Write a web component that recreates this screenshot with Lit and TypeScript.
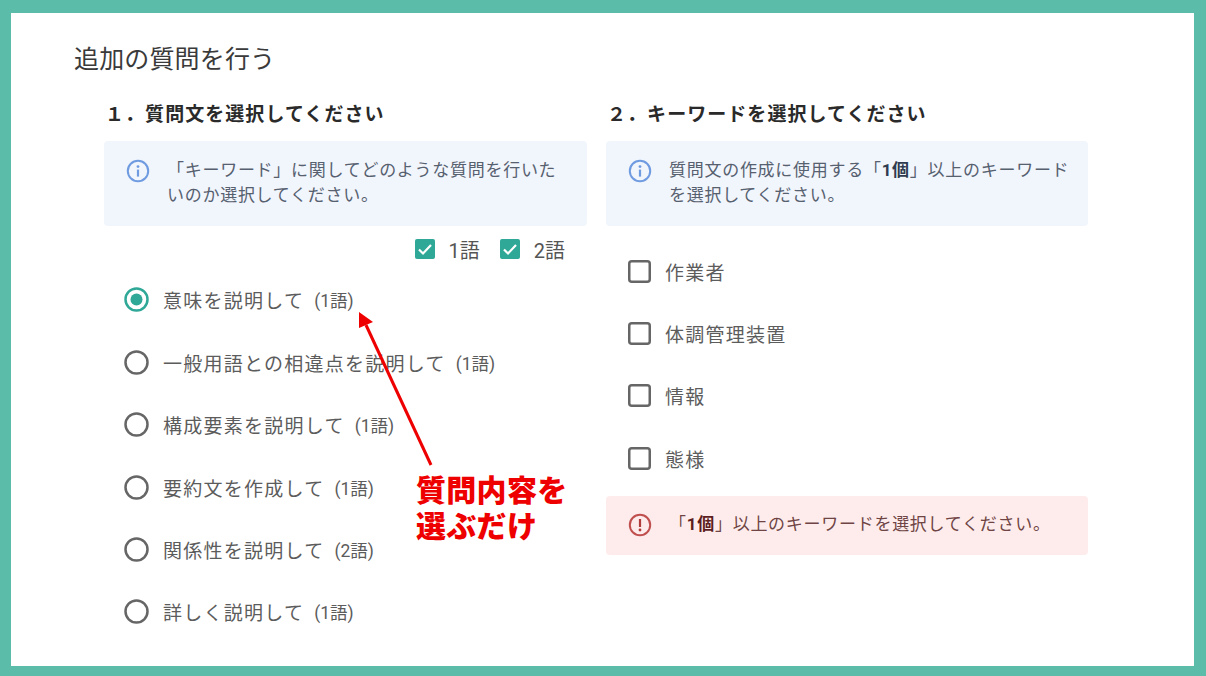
import { LitElement, html, css, svg } from "lit";
import { customElement } from "lit/decorators.js";

const radios = [
  ["意味を説明して", "1語", true],
  ["一般用語との相違点を説明して", "1語", false],
  ["構成要素を説明して", "1語", false],
  ["要約文を作成して", "1語", false],
  ["関係性を説明して", "2語", false],
  ["詳しく説明して", "1語", false],
] as const;
const keywords = ["作業者", "体調管理装置", "情報", "態様"];

const infoIcon = html`<svg class="ic" viewBox="0 0 24 24" fill="none"><circle cx="12" cy="12" r="10.2" stroke="#6f9be0" stroke-width="2"/><rect x="10.9" y="10.6" width="2.2" height="7" fill="#6f9be0"/><circle cx="12" cy="7.6" r="1.4" fill="#6f9be0"/></svg>`;
const errIcon = html`<svg class="ic" viewBox="0 0 24 24" fill="none"><circle cx="12" cy="12" r="10.2" stroke="#c0504f" stroke-width="2"/><rect x="10.9" y="6" width="2.2" height="8" fill="#b03c3c"/><circle cx="12" cy="17" r="1.4" fill="#b03c3c"/></svg>`;

@customElement("app-root")
export class AppRoot extends LitElement {
  static styles = css`
    :host {
      display: block;
      width: 1206px;
      height: 676px;
      font-family: Roboto, "Noto Sans CJK JP", sans-serif;
      position: relative;
      overflow: hidden;
    }
    .frame {
      box-sizing: border-box;
      height: 676px;
      border-style: solid;
      border-color: #5bbcaa;
      border-width: 13px 12px 10px 11px;
      background: #fff;
      padding: 32px 0 0 62px;
    }
    h1 {
      margin: 0;
      padding-left: 1px;
      font-size: 25px;
      font-weight: 400;
      letter-spacing: 0.15px;
      line-height: 30px;
      color: #3a3a3a;
    }
    .cols {
      display: grid;
      grid-template-columns: 483px 482px;
      column-gap: 19px;
      margin: 23px 0 0 31px;
    }
    h2 {
      margin: 0 0 13px;
      padding-left: 1px;
      font-size: 19px;
      font-weight: 700;
      letter-spacing: 1.05px;
      line-height: 30px;
      color: #2a2a2a;
      transform: translateY(2px);
    }
    .box {
      box-sizing: border-box;
      display: flex;
      gap: 17px;
      padding: 17px 18px 0 22px;
      height: 85px;
      border-radius: 4px;
      background: #f1f5fc;
      color: #56606f;
      font-size: 17px;
      line-height: 25px;
      letter-spacing: 0.72px;
    }
    .box b { color: #2f3b4f; }
    .ic { width: 24px; height: 24px; flex: none; margin-top: 1px; }
    .alert {
      height: 59px;
      margin-top: 6px;
      background: #feecec;
      color: #6e4444;
      padding-top: 16px;
      gap: 17px;
    }
    .alert b { color: #5c1e1e; }
    .filters {
      display: flex;
      justify-content: flex-end;
      gap: 20px;
      height: 42.8px;
      padding: 10px 22px 0 0;
      box-sizing: border-box;
    }
    .filter {
      display: flex;
      align-items: center;
      gap: 14px;
      height: 26px;
      font-size: 20px;
      color: #555;
    }
    .tick { width: 20px; height: 20px; }
    .row {
      display: flex;
      align-items: center;
      height: 62.4px;
      font-size: 19px;
      letter-spacing: 1.25px;
      color: #5c5c5c;
    }
    .radio { padding-left: 20px; }
    .radio svg { width: 25px; height: 25px; margin-right: 14px; flex: none; }
    .note { font-size: 17.5px; letter-spacing: 0; margin-left: 10px; }
    .kwlist { margin-top: 14px; }
    .kw { padding-left: 22px; }
    .kw svg { width: 23px; height: 23px; margin-right: 14px; flex: none; }
    .overlay { position: absolute; left: 0; top: 0; pointer-events: none; }
    .callout {
      position: absolute;
      left: 416px;
      top: 473px;
      color: #ee0000;
      font-size: 30px;
      font-weight: 900;
      letter-spacing: 0.3px;
      line-height: 36px;
    }
  `;

  render() {
    return html`
      <div class="frame">
        <h1>追加の質問を行う</h1>
        <div class="cols">
          <section>
            <h2>１．質問文を選択してください</h2>
            <div class="box">${infoIcon}<div>「キーワード」に関してどのような質問を行いたいのか選択してください。</div></div>
            <div class="filters">
              ${["1語", "2語"].map(
                (t) => html`<div class="filter">
                  <svg class="tick" viewBox="0 0 20 20"><rect width="20" height="20" rx="2" fill="#2fa897"/><path d="M4 10.5l4 4 8-8.5" fill="none" stroke="#fff" stroke-width="2.2"/></svg>
                  ${t}
                </div>`
              )}
            </div>
            ${radios.map(
              ([label, note, on]) => html`<div class="row radio">
                <svg viewBox="0 0 25 25">
                  <circle cx="12.5" cy="12.5" r="11" fill="none" stroke=${on ? "#2fa897" : "#666"} stroke-width="2.5"/>
                  ${on ? svg`<circle cx="12.5" cy="12.5" r="6" fill="#2fa897"/>` : ""}
                </svg>
                ${label}<span class="note">(${note})</span>
              </div>`
            )}
          </section>
          <section>
            <h2>２．キーワードを選択してください</h2>
            <div class="box">${infoIcon}<div>質問文の作成に使用する「<b>1個</b>」以上のキーワードを選択してください。</div></div>
            <div class="kwlist">
              ${keywords.map(
                (k) => html`<div class="row kw">
                  <svg viewBox="0 0 23 23"><rect x="1.25" y="1.25" width="20.5" height="20.5" rx="2.5" fill="none" stroke="#666" stroke-width="2.5"/></svg>
                  ${k}
                </div>`
              )}
            </div>
            <div class="box alert">${errIcon}<div>「<b>1個</b>」以上のキーワードを選択してください。</div></div>
          </section>
        </div>
      </div>
      <svg class="overlay" width="1206" height="676" viewBox="0 0 1206 676">
        <line x1="431" y1="465" x2="366" y2="325" stroke="#ee0000" stroke-width="3"/>
        <polygon points="359,312 373,322 359,328" fill="#ee0000"/>
      </svg>
      <div class="callout">質問内容を<br />選ぶだけ</div>
    `;
  }
}
